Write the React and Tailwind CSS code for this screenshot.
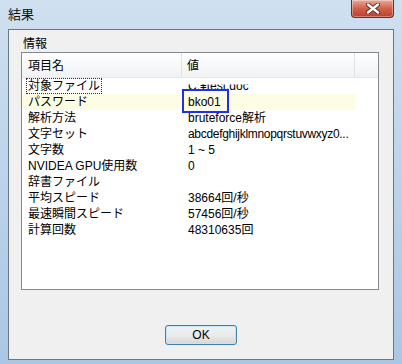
import React from "react";

const rows = [
  ["対象ファイル", "C:¥test.doc"],
  ["パスワード", "bko01"],
  ["解析方法", "bruteforce解析"],
  ["文字セット", "abcdefghijklmnopqrstuvwxyz0..."],
  ["文字数", "1 ~ 5"],
  ["NVIDEA GPU使用数", "0"],
  ["辞書ファイル", ""],
  ["平均スピード", "38664回/秒"],
  ["最速瞬間スピード", "57456回/秒"],
  ["計算回数", "48310635回"],
];

export default function App() {
  const font = { fontFamily: '"Liberation Sans", "Noto Sans CJK JP", sans-serif' };
  return (
    <div
      className="w-[402px] h-[364px] flex flex-col bg-gradient-to-b from-[#cfe0f0] via-[#bcd3ea] to-[#a9c7e4] text-[12px] text-black overflow-hidden"
      style={font}
    >
      {/* title bar */}
      <div className="h-[29px] flex items-start justify-between shrink-0">
        <div className="ml-[8px] mt-[7px] leading-[16px] text-[13px] text-[#111]">結果</div>
        <div className="mr-[8px] w-[43px] h-[18px] rounded-b-[4px] border border-t-0 border-[#6e2b22] bg-gradient-to-b from-[#e9a99a] via-[#d0614c] to-[#b8402c] flex items-center justify-center shadow-[inset_0_0_0_1px_rgba(255,255,255,0.35)]">
          <svg width="14" height="11" viewBox="0 0 14 11">
            <path d="M2 1.5 L12 9.5 M12 1.5 L2 9.5" stroke="#5a2a22" strokeWidth="4.2" strokeLinecap="round" />
            <path d="M2 1.5 L12 9.5 M12 1.5 L2 9.5" stroke="#ffffff" strokeWidth="2.4" strokeLinecap="round" />
          </svg>
        </div>
      </div>
      {/* client area */}
      <div className="mx-[8px] h-[331px] border border-[#6c7683] bg-[#f0f0f0] flex flex-col shrink-0">
        <div className="h-[22px] pl-[14px] pt-[7px] leading-[14px] text-[12px]">情報</div>
        <div className="ml-[12px] w-[358px] h-[238px] border border-[#828790] bg-white relative flex flex-col">
          {/* header */}
          <div className="h-[25px] flex bg-gradient-to-b from-[#ffffff] to-[#f1f2f4] border-b border-[#e5e5e5] shrink-0">
            <div className="w-[160px] pl-[6px] pt-[2px] flex items-center border-r border-[#dfe2e6]">項目名</div>
            <div className="w-[173px] pl-[5px] pt-[2px] flex items-center border-r border-[#dfe2e6]">値</div>
            <div className="flex-1"></div>
          </div>
          <div className="flex flex-col">
            {rows.map(([k, v], i) => (
              <div
                key={k}
                className={
                  "h-[16px] flex items-center leading-[16px] " +
                  (i === 1 ? "bg-[#fdfde4] w-[333px]" : "w-[333px]")
                }
              >
                <div className="w-[160px] pl-[5px] flex">
                  <span
                    className={
                      "px-[1px] whitespace-nowrap leading-[14px] " +
                      (i === 0 ? "outline outline-1 outline-dotted outline-[#333]" : "")
                    }
                  >
                    {k}
                  </span>
                </div>
                <div className="w-[173px] pl-[6px] whitespace-nowrap">
                  <span
                    className={
                      i === 0
                        ? "inline-block [clip-path:inset(40%_0_0_0)]"
                        : i === 3
                        ? "tracking-[-0.3px]"
                        : ""
                    }
                  >
                    {v}
                  </span>
                </div>
              </div>
            ))}
          </div>
          {/* annotation box */}
          <div className="absolute left-[160px] top-[36px] w-[47px] h-[24px] border-2 border-[#1f2ff2]"></div>
        </div>
        <div className="flex-1 flex items-end justify-center pb-[14px]">
          <div className="w-[72px] h-[20px] rounded-[3px] border border-[#3c7fb1] bg-gradient-to-b from-[#f2f2f2] via-[#ebebeb] to-[#d6d6d6] shadow-[inset_0_0_0_1px_#c0e6f8] flex items-center justify-center text-[12px]">
            OK
          </div>
        </div>
      </div>
    </div>
  );
}
